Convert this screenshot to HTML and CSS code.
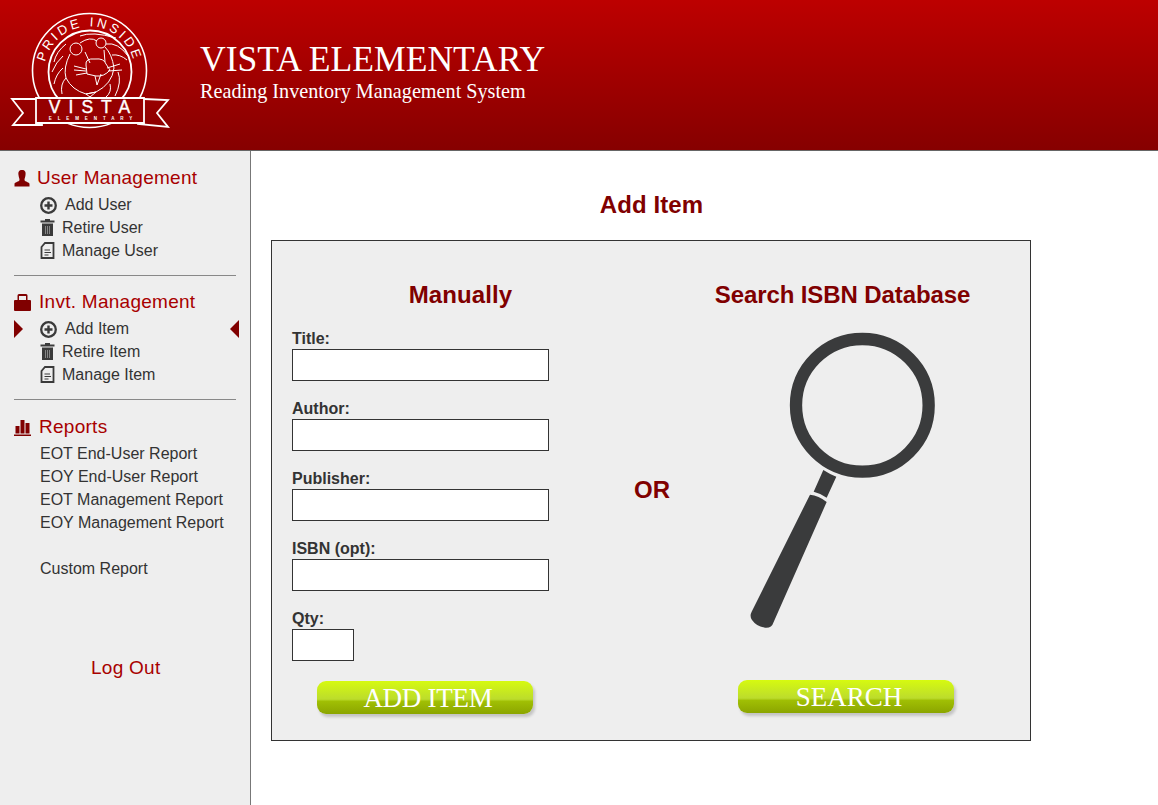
FILE: index.html
```html
<!DOCTYPE html>
<html lang="en">
<head>
	<meta charset="UTF-8">
	<title>Add Item</title>
	<link rel="stylesheet" href="styles.css">
</head>
<body>
	<div class="header">
		<svg class="logo" width="200" height="150" viewBox="0 0 200 150">
			<defs>
				<path id="arc" d="M44 72 A45.500 45.500 0 0 1 135 72"></path>
			</defs>
			<g fill="none" stroke="#fff">
				<circle cx="89.500" cy="70.500" r="57" stroke-width="1.600"></circle>
				<circle cx="90" cy="72" r="41.500" stroke-width="1.800"></circle>
				<!-- lion -->
				<g stroke-width="1">
					<circle cx="76" cy="49" r="6"></circle>
					<circle cx="101" cy="43" r="5"></circle>
					<path d="M80 43 Q90 36 97 41"></path>
					<path d="M70 54 Q63 68 66 78 Q72 90 86 94 L96 92 Q112 84 114 68 Q112 54 105 47"></path>
					<path d="M85 52 L90 63 M104 50 L105 62"></path>
					<path d="M86 65 Q85 58 95 59 Q104 58 106 64 L110 70 Q104 77 96 76 L87 74 Z"></path>
					<path d="M74 66 L86 69 M74 70 L86 71 M76 75 L87 73 M107 68 L120 64 M108 71 L122 70"></path>
					<path d="M95 76 L97 85 L101 74"></path>
					<path d="M54 62 Q56 52 66 44 M52 72 Q56 62 63 56 M54 84 Q56 74 63 68 M62 94 Q60 84 66 78 M80 36 Q92 31 116 38 M106 44 Q118 42 128 56 M112 55 Q120 54 127 60 M118 72 Q122 82 115 96 M110 84 Q112 92 106 97 M86 94 L96 92 L90 97 Z"></path>
				</g>
				<!-- banner -->
				<path d="M36 98 H144 V123 H36 Z" fill="#960000" stroke-width="1.800"></path>
				<path d="M36 99 L12 99 L23 113 L13 125 L42 125 V123 M144 99 L168 100 L157 113 L168 127 L138 124 V123" stroke-width="1.800"></path>
			</g>
			<text class="logo-arc"><textPath href="#arc" startOffset="50%" text-anchor="middle">PRIDE INSIDE</textPath></text>
			<text class="logo-vista" x="93.500" y="112.500" text-anchor="middle">VISTA</text>
			<text class="logo-elem" x="93.500" y="119.500" text-anchor="middle">ELEMENTARY</text>
		</svg>
		<div class="header-text">
			<h1>VISTA ELEMENTARY</h1>
			<p>Reading Inventory Management System</p>
		</div>
	</div>

	<div class="page">
		<div class="sidebar">
			<div class="nav-head">
				<svg class="head-icon" width="16" height="17" viewBox="0 0 16 17"><path d="M8 0 C11 0 12 2 11.500 5 C11.300 7 10.500 8.500 10.500 10 C11 12 15.500 12 15.500 14 V16.500 H.5 V14 C.5 12 5 12 5.500 10 C5.500 8.500 4.700 7 4.500 5 C4 2 5 0 8 0 Z"></path></svg>
				<span>User Management</span>
			</div>
			<ul class="nav">
				<li class="gap-plus">
					<svg class="icon" width="18" height="18" viewBox="0 0 18 18"><circle cx="8.500" cy="9.500" r="7.300" fill="none" stroke="#3a3a3a" stroke-width="2.300"></circle><path d="M8.500 5.500 V13.500 M4.500 9.500 H12.500" stroke="#3a3a3a" stroke-width="2.400"></path></svg>
					Add User
				</li>
				<li>
					<svg class="icon" width="15" height="17" viewBox="0 0 15 17"><path d="M5 0 H10 V1.500 H14.500 V3.500 H.5 V1.500 H5 Z M2 4.500 H13 V17 H2 Z" fill="#3a3a3a"></path><path d="M5.500 7 V15 M7.500 7 V15 M9.500 7 V15" stroke="#999" stroke-width=".8"></path></svg>
					Retire User
				</li>
				<li>
					<svg class="icon" width="15" height="17" viewBox="0 0 15 17"><path d="M5 1 H13.500 V16 H1.500 V5 Z" fill="none" stroke="#3a3a3a" stroke-width="1.800"></path><path d="M4.500 8 H10 M4.500 10.500 H11 M4.500 13 H8.500" stroke="#3a3a3a" stroke-width="1.200"></path></svg>
					Manage User
				</li>
			</ul>
			<div class="rule"></div>

			<div class="nav-head wide-gap">
				<svg class="head-icon" width="17" height="17" viewBox="0 0 17 17"><path d="M3.500 6 V1.500 Q3.500 0 5 0 H12 Q13.500 0 13.500 1.500 V6 H12 V2 H5 V6 Z"></path><rect x="0" y="6" width="17" height="11" rx="1"></rect></svg>
				<span>Invt. Management</span>
			</div>
			<ul class="nav">
				<li class="gap-plus current">
					<svg class="icon" width="18" height="18" viewBox="0 0 18 18"><circle cx="8.500" cy="9.500" r="7.300" fill="none" stroke="#3a3a3a" stroke-width="2.300"></circle><path d="M8.500 5.500 V13.500 M4.500 9.500 H12.500" stroke="#3a3a3a" stroke-width="2.400"></path></svg>
					Add Item
				</li>
				<li>
					<svg class="icon" width="15" height="17" viewBox="0 0 15 17"><path d="M5 0 H10 V1.500 H14.500 V3.500 H.5 V1.500 H5 Z M2 4.500 H13 V17 H2 Z" fill="#3a3a3a"></path><path d="M5.500 7 V15 M7.500 7 V15 M9.500 7 V15" stroke="#999" stroke-width=".8"></path></svg>
					Retire Item
				</li>
				<li>
					<svg class="icon" width="15" height="17" viewBox="0 0 15 17"><path d="M5 1 H13.500 V16 H1.500 V5 Z" fill="none" stroke="#3a3a3a" stroke-width="1.800"></path><path d="M4.500 8 H10 M4.500 10.500 H11 M4.500 13 H8.500" stroke="#3a3a3a" stroke-width="1.200"></path></svg>
					Manage Item
				</li>
			</ul>
			<div class="rule rule-low"></div>

			<div class="nav-head wide-gap">
				<svg class="head-icon" width="17" height="17" viewBox="0 0 17 17"><path d="M1.500 7 H5.500 V14.500 H1.500 Z M6.500 1 H10.500 V14.500 H6.500 Z M11.500 4 H15.500 V14.500 H11.500 Z M0 15.500 H17 V17 H0 Z"></path></svg>
				<span>Reports</span>
			</div>
			<ul class="nav">
				<li>EOT End-User Report</li>
				<li>EOY End-User Report</li>
				<li>EOT Management Report</li>
				<li>EOY Management Report</li>
				<li class="spaced">Custom Report</li>
			</ul>
			<div class="logout">Log Out</div>
		</div>

		<div class="main">
			<h2 class="title">Add Item</h2>
			<div class="box">
				<div class="col-manual">
					<h3 class="col-head manual-head">Manually</h3>
					<label class="field">Title:<input type="text"></label>
					<label class="field">Author:<input type="text"></label>
					<label class="field">Publisher:<input type="text"></label>
					<label class="field">ISBN (opt):<input type="text"></label>
					<label class="field qty">Qty:<input type="text"></label>
					<button class="btn add-btn">ADD ITEM</button>
				</div>
				<div class="or">OR</div>
				<div class="col-search">
					<h3 class="col-head search-head">Search ISBN Database</h3>
					<svg class="glass" width="240" height="320" viewBox="0 0 720 960">
						<circle cx="427" cy="256" r="199" fill="none" stroke="#3a3b3c" stroke-width="37"></circle>
						<path d="M310 450 Q328 462 349 470 L320 533 Q302 520 281 515 Z" fill="#3a3b3c"></path>
						<path d="M270 524 Q296 526 320 546 L160 908 Q155 925 135 923 Q110 920 96 900 Q88 888 95 875 Z" fill="#3a3b3c"></path>
					</svg>
					<button class="btn search-btn">SEARCH</button>
				</div>
			</div>
		</div>
	</div>
</body>
</html>
```

FILE: styles.css
```css
*{
	padding: 0;
	margin: 0;
	list-style: none;
	box-sizing: border-box;
}
body{
	font-family: "Liberation Sans", Arial, sans-serif;
	height: 805px;
	overflow: hidden;
	background: #fff;
}
.header{
	height: 151px;
	display: flex;
	background: linear-gradient(#bd0000, #860000);
	border-bottom: 1px solid #666;
	color: #fff;
	font-family: "Liberation Serif", serif;
}
.logo{
	flex: none;
}
.logo-arc{
	font: 13px "Liberation Sans", sans-serif;
	letter-spacing: 3px;
	fill: #fff;
}
.logo-vista{
	font: 17.500px "Liberation Sans", sans-serif;
	letter-spacing: 8px;
	fill: #fff;
	stroke: #fff;
	stroke-width: .4px;
}
.logo-elem{
	font: bold 4.500px "Liberation Sans", sans-serif;
	letter-spacing: 5.900px;
	fill: #fff;
}
.header-text{
	padding-top: 38px;
}
.header-text h1{
	font-size: 35.600px;
	font-weight: normal;
	line-height: 42px;
}
.header-text p{
	font-size: 20.200px;
	line-height: 23px;
}
.page{
	display: flex;
	height: 654px;
}
.sidebar{
	width: 251px;
	flex: none;
	background: #eee;
	border-right: 1px solid #777;
	padding: 16px 14px 0;
	color: #333;
}
.nav-head{
	display: flex;
	align-items: center;
	gap: 7px;
	height: 22px;
	font-size: 19px;
	letter-spacing: .27px;
	color: #a80000;
}
.wide-gap{
	gap: 8px;
}
.head-icon{
	fill: #800000;
	flex: none;
}
.nav{
	margin-top: 4px;
	margin-left: 26px;
	font-size: 16px;
}
.nav li{
	position: relative;
	display: flex;
	align-items: center;
	gap: 7px;
	height: 23px;
	white-space: nowrap;
}
.nav .spaced{
	margin-top: 23px;
}
.current::before,
.current::after{
	content: "";
	position: absolute;
	top: 3px;
	border-top: 9px solid transparent;
	border-bottom: 9px solid transparent;
}
.current::before{
	left: -26px;
	border-left: 9px solid #800000;
}
.current::after{
	left: 190px;
	border-right: 9px solid #800000;
}
.rule{
	height: 1px;
	background: #888;
	margin: 13px 0 15px;
}
.rule-low{
	margin-bottom: 16px;
}
.logout{
	margin-top: 77px;
	padding-left: 77px;
	font-size: 19px;
	letter-spacing: .27px;
	color: #a80000;
}
.main{
	width: 780px;
	padding: 40px 0 0 20px;
}
.title{
	padding-left: 1px;
	font-size: 24px;
	letter-spacing: .1px;
	line-height: 28px;
	color: #800000;
	text-align: center;
	width: 760px;
}
.box{
	display: flex;
	width: 760px;
	height: 501px;
	margin-top: 21px;
	padding: 40px 21px 0 20px;
	background: #eee;
	border: 1px solid #333;
}
.col-manual{
	width: 337px;
	flex: none;
}
.col-search{
	width: 334px;
	flex: none;
}
.col-head{
	font-size: 24px;
	line-height: 28px;
	color: #800000;
	text-align: center;
}
.manual-head{
	letter-spacing: .1px;
	margin-bottom: 20px;
}
.search-head{
	letter-spacing: -.1px;
	padding-left: 1px;
}
.field{
	display: block;
	height: 70px;
	font-size: 16px;
	font-weight: bold;
	line-height: 20px;
	color: #333;
}
.field input{
	display: block;
	width: 257px;
	height: 32px;
	border: 1px solid #333;
	background: #fff;
}
.qty{
	height: 52px;
}
.qty input{
	width: 62px;
}
.or{
	width: 46px;
	flex: none;
	margin-top: 195px;
	font-size: 24px;
	font-weight: bold;
	line-height: 28px;
	color: #800000;
	text-align: center;
}
.glass{
	display: block;
	margin: 11px 0 0 45px;
}
.btn{
	display: block;
	width: 216px;
	height: 33px;
	padding: 1px 0 0 6px;
	border: 0;
	border-radius: 9px;
	background: linear-gradient(#d6fa10 0, #bcdc2c 55%, #a0bf04 62%, #8ba500 100%);
	box-shadow: 2px 3px 3px rgba(0,0,0,.18);
	color: #fff;
	font-family: "Liberation Serif", serif;
	font-size: 27px;
	line-height: 33px;
}
.add-btn{
	margin: 20px 0 0 25px;
	letter-spacing: -.25px;
}
.search-btn{
	margin: 40px 0 0 63px;
}
```
